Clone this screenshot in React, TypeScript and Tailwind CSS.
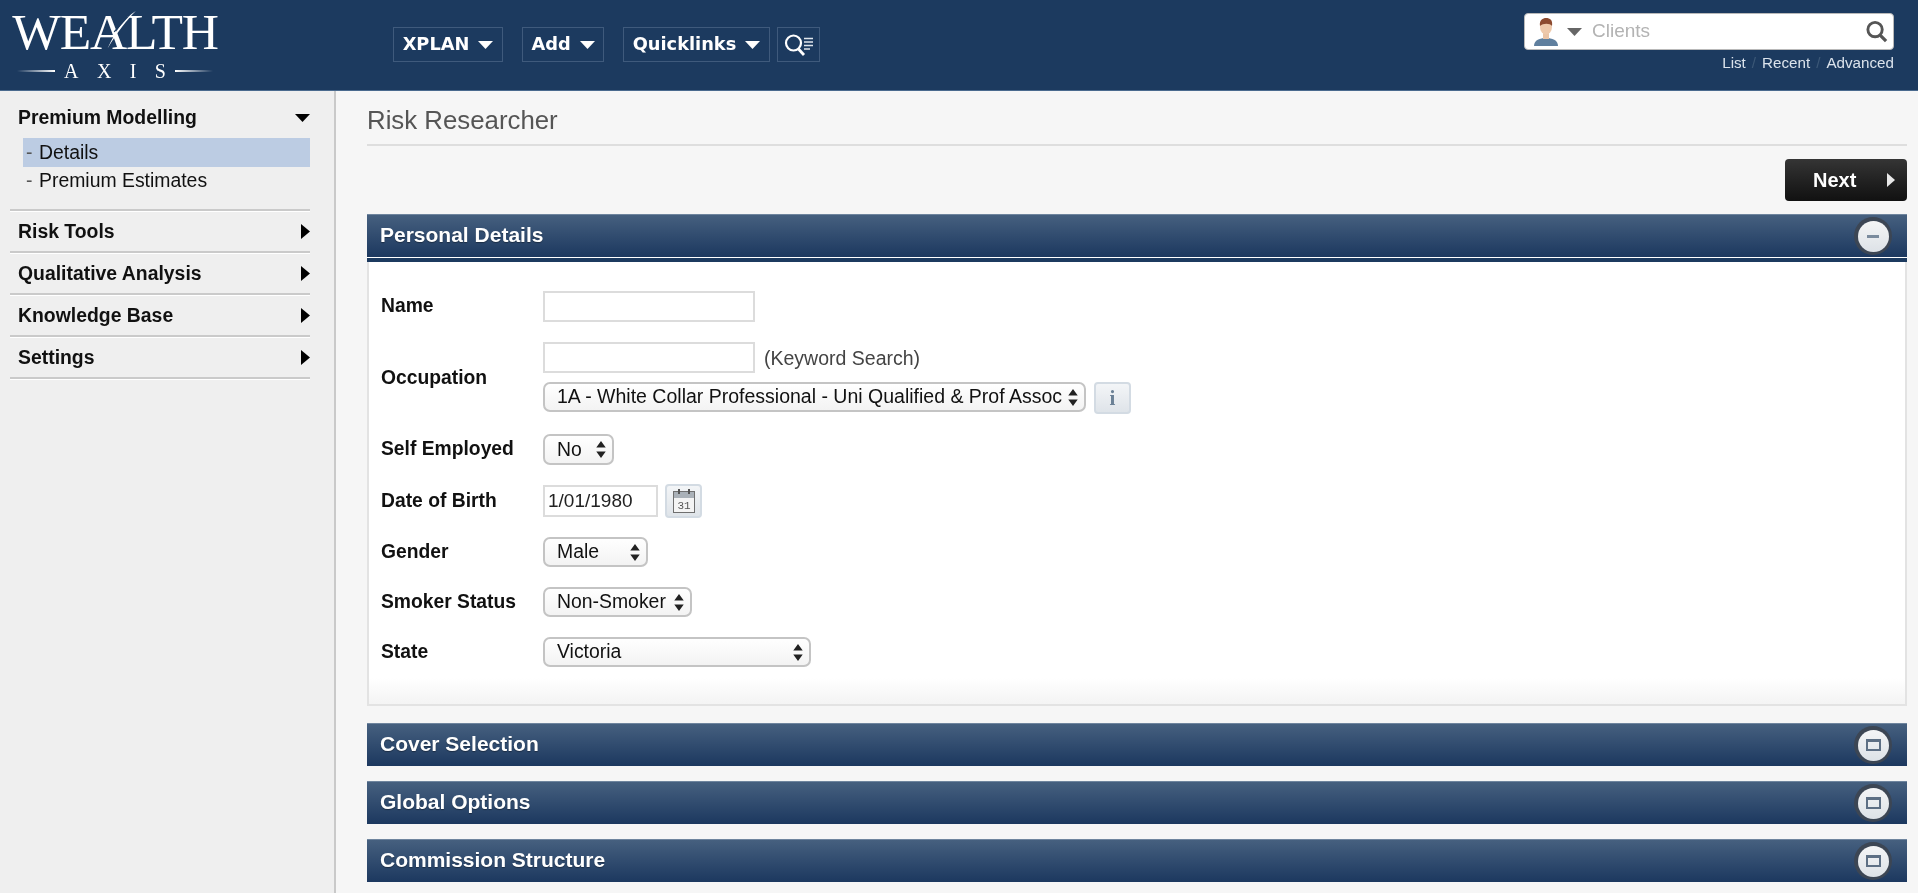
import React from "react";

const sans = "font-['Liberation_Sans',Arial,sans-serif]";

function Tri({ dir, className }: { dir: "down" | "right"; className: string }) {
  return (
    <svg viewBox="0 0 10 10" className={className} preserveAspectRatio="none" aria-hidden>
      {dir === "down" ? <path d="M0 0H10L5 10Z" fill="currentColor" /> : <path d="M0 0L10 5L0 10Z" fill="currentColor" />}
    </svg>
  );
}

function Logo() {
  return (
    <div className="w-[230px] flex flex-col items-center pt-[10px] text-white font-['Liberation_Serif',serif]">
      <div className="relative h-[44px] w-[208px] text-[51.500px] leading-[44px] tracking-[-1.200px] whitespace-nowrap text-center">
        WEALTH
        <svg viewBox="0 0 60 50" className="absolute left-[84px] top-[-3px] w-[50px] h-[48px]" aria-hidden>
          <path d="M49 1C36 9 26 22 15 46C27 26 38 12 49 1Z" fill="#fff" />
          <path d="M23 26L41 6" stroke="#1c3a5f" strokeWidth="1.600" />
        </svg>
      </div>
      <div className="flex items-center h-[24px] w-[196px] mt-[5px]">
        <span className="h-[2px] w-[38px] bg-gradient-to-r from-transparent to-white" />
        <span className="flex-1 flex justify-between px-[9px] text-[20px] leading-none">
          <span>A</span><span>X</span><span>I</span><span>S</span>
        </span>
        <span className="h-[2px] w-[38px] bg-gradient-to-l from-transparent to-white" />
      </div>
    </div>
  );
}

function NavBtn({ label, w }: { label: string; w: string }) {
  return (
    <div className={`${w} h-[35px] flex items-center justify-center gap-[9px] border border-[#3f5a7c] bg-[#1c3a5f] text-white text-[17.800px] font-bold font-['DejaVu_Sans',sans-serif]`}>
      <span className="pb-[1px]">{label}</span>
      <Tri dir="down" className="w-[15px] h-[8px] text-white" />
    </div>
  );
}

function Header() {
  return (
    <header className={`h-[91px] shrink-0 flex bg-[#1c3a5f] border-b border-[#4a6a8e] ${sans}`}>
      <div className="w-[393px] shrink-0"><Logo /></div>
      <div className="flex items-start pt-[27px]">
        <NavBtn label="XPLAN" w="w-[110px]" />
        <div className="w-[19px]" />
        <NavBtn label="Add" w="w-[82px]" />
        <div className="w-[19px]" />
        <NavBtn label="Quicklinks" w="w-[147px]" />
        <div className="w-[7px]" />
        <div className="w-[43px] h-[35px] border border-[#3f5a7c] flex items-center justify-center">
          <svg viewBox="0 0 32 24" className="w-[32px] h-[24px]" fill="none" stroke="#fff" aria-hidden>
            <circle cx="10.500" cy="10" r="7.500" strokeWidth="2.200" />
            <path d="M15.500 16L21 22" strokeWidth="2.800" />
            <path d="M21 5.500H30M21 9H30M21 12.500H30M21 16H27" strokeWidth="1.500" stroke="#dfe5ec" />
          </svg>
        </div>
      </div>
      <div className="ml-auto mr-[24px] w-[370px] flex flex-col pt-[13px]">
        <div className="h-[37px] bg-white rounded-[4px] border border-[#b9b9b9] flex items-center pl-[9px] pr-[5px]">
          <svg viewBox="0 0 24 30" className="w-[24px] h-[30px]" aria-hidden>
            <path d="M0 29C0 23 6 21 12 21C18 21 24 23 24 29Z" fill="#5f7f9e" />
            <rect x="9" y="15" width="6" height="7" fill="#eac4a6" />
            <ellipse cx="12" cy="10" rx="6" ry="7.500" fill="#eec9ab" />
            <path d="M6 9C5 3 9 1 12 1C16 1 19 3 18 9C16 6 9 6 6 9Z" fill="#8c4a2f" />
          </svg>
          <Tri dir="down" className="w-[15px] h-[8px] text-[#666] ml-[9px]" />
          <span className="ml-[10px] text-[19px] text-[#b3b3b3]">Clients</span>
          <svg viewBox="0 0 24 24" className="ml-auto w-[23px] h-[23px]" fill="none" stroke="#555" aria-hidden>
            <circle cx="10.500" cy="10" r="7.500" strokeWidth="3" />
            <path d="M16 16L22 22" strokeWidth="3.400" />
          </svg>
        </div>
        <div className="mt-[3px] flex justify-end items-center text-[15.200px] leading-[20px] text-[#dbe3ec]">
          <span>List</span>
          <span className="mx-[6px] text-[#3c5877]">/</span>
          <span>Recent</span>
          <span className="mx-[6px] text-[#3c5877]">/</span>
          <span>Advanced</span>
        </div>
      </div>
    </header>
  );
}

function SideRow({ label }: { label: string }) {
  return (
    <div className="h-[42px] flex items-center justify-between pl-[8px] border-b-2 border-[#cacaca] shadow-[0_1px_0_#fff]">
      <span className="font-bold pt-[1px]">{label}</span>
      <Tri dir="right" className="w-[9px] h-[15px] text-black" />
    </div>
  );
}

function Sidebar() {
  return (
    <aside className={`w-[336px] shrink-0 bg-[#efefef] border-r-2 border-[#c9c9c9] pl-[10px] pr-[24px] text-[19.400px] text-[#111] ${sans}`}>
      <div className="pt-[7px] pb-[14px] border-b-2 border-[#cacaca] shadow-[0_1px_0_#fff]">
        <div className="h-[40px] flex items-center justify-between pl-[8px]">
          <span className="font-bold">Premium Modelling</span>
          <Tri dir="down" className="w-[15px] h-[8px] text-black" />
        </div>
        <div className="ml-[13px] h-[29px] bg-[#bccce3] flex items-center pl-[3px]">
          <span className="w-[13px] text-[#555]">-</span>Details
        </div>
        <div className="ml-[13px] h-[28px] flex items-center pl-[3px]">
          <span className="w-[13px] text-[#555]">-</span>Premium Estimates
        </div>
      </div>
      <SideRow label="Risk Tools" />
      <SideRow label="Qualitative Analysis" />
      <SideRow label="Knowledge Base" />
      <SideRow label="Settings" />
    </aside>
  );
}

function RoundBtn({ open }: { open?: boolean }) {
  return (
    <div className="w-[38px] h-[38px] rounded-full bg-[#3c4654] flex items-center justify-center">
      <div className="w-[31px] h-[31px] rounded-full bg-gradient-to-b from-[#f4f5f6] to-[#dde2e7] flex items-center justify-center">
        {open ? (
          <div className="w-[12px] h-[3px] bg-[#7a8b9d]" />
        ) : (
          <div className="w-[15px] h-[12px] border-2 border-t-[3px] border-[#5d6f84]" />
        )}
      </div>
    </div>
  );
}

function PanelHead({ title, open }: { title: string; open?: boolean }) {
  return (
    <div className="h-[43px] flex items-center justify-between pl-[13px] pr-[15px] bg-gradient-to-b from-[#46607f] to-[#1c385f] border-t border-[#6f859e] text-white text-[21px] font-bold [text-shadow:0_1px_1px_rgba(0,0,0,0.35)]">
      <span className="pb-[2px]">{title}</span>
      <RoundBtn open={open} />
    </div>
  );
}

function Input({ w, value, h = "h-[31px]" }: { w: string; value?: string; h?: string }) {
  return (
    <input
      readOnly
      value={value ?? ""}
      className={`${w} ${h} bg-white border-2 border-[#dcdcdc] px-[3px] text-[19px] text-[#222] outline-none`}
    />
  );
}

function Select({ w, value, h = "h-[30px]", size = "text-[19.400px]" }: { w: string; value: string; h?: string; size?: string }) {
  return (
    <div className={`relative ${w} ${h}`}>
      <select
        value={value}
        onChange={() => {}}
        className={`appearance-none w-full h-full rounded-[7px] border-2 border-[#c4c4c4] bg-gradient-to-b from-white to-[#f3f3f3] pl-[12px] pr-[22px] pb-[2px] ${size} leading-[24px] text-[#111] outline-none overflow-hidden`}
      >
        <option>{value}</option>
      </select>
      <svg viewBox="0 0 10 18" className="absolute right-[8px] top-[7px] w-[10px] h-[17px] pointer-events-none" aria-hidden>
        <path d="M5 0L10 7H0ZM5 18L0 11H10Z" fill="#222" />
      </svg>
    </div>
  );
}

function Row({ label, mt, children }: { label: string; mt: string; children: React.ReactNode }) {
  return (
    <div className={`flex items-center ${mt}`}>
      <div className="w-[162px] shrink-0 font-bold text-[19.300px] text-[#111]">{label}</div>
      {children}
    </div>
  );
}

function SquareBtn({ h, children }: { h: string; children: React.ReactNode }) {
  return (
    <div className={`${h} w-[37px] rounded-[4px] border-2 border-[#d3dbe3] bg-gradient-to-b from-[#f3f5f7] to-[#dfe4e9] flex items-center justify-center`}>
      {children}
    </div>
  );
}

function Main() {
  return (
    <main className={`flex-1 min-w-0 bg-[#f6f6f6] pl-[31px] pr-[11px] ${sans}`}>
      <div className="h-[55px] flex items-center border-b-2 border-[#dedede] text-[25.800px] text-[#555] pt-[5px]">Risk Researcher</div>
      <div className="mt-[13px] flex justify-end">
        <div className="w-[122px] h-[42px] rounded-[4px] bg-gradient-to-b from-[#353535] to-[#111] flex items-center justify-between pl-[28px] pr-[12px] text-white text-[20px] font-bold">
          <span>Next</span>
          <Tri dir="right" className="w-[8px] h-[14px] text-[#e8e8e8]" />
        </div>
      </div>
      <div className="mt-[13px]">
        <PanelHead title="Personal Details" open />
        <div className="h-px bg-white" />
        <div className="h-[4px] bg-[#1c3a5f]" />
        <div className="h-[444px] border-2 border-t-0 border-[#e3e3e3] bg-gradient-to-b from-white from-[94%] to-[#f4f4f4] pl-[12px] pt-[29px]">
          <Row label="Name" mt="">
            <Input w="w-[212px]" />
          </Row>
          <Row label="Occupation" mt="mt-[20px]">
            <div className="flex flex-col h-[72px]">
              <div className="flex items-center">
                <Input w="w-[212px]" />
                <span className="ml-[9px] text-[19.500px] text-[#444] relative top-[1px]">(Keyword Search)</span>
              </div>
              <div className="mt-[9px] flex items-start gap-[8px]">
                <Select w="w-[543px]" size="text-[19.500px]" value="1A - White Collar Professional - Uni Qualified & Prof Assoc" />
                <SquareBtn h="h-[32px]">
                  <span className="font-['Liberation_Serif',serif] font-bold text-[21px] text-[#6b8196] leading-none">i</span>
                </SquareBtn>
              </div>
            </div>
          </Row>
          <Row label="Self Employed" mt="mt-[20px]">
            <Select w="w-[71px]" value="No" h="h-[31px]" />
          </Row>
          <Row label="Date of Birth" mt="mt-[19px]">
            <div className="flex items-center gap-[7px]">
              <Input w="w-[115px]" value="1/01/1980" h="h-[32px]" />
              <SquareBtn h="h-[34px]">
                <svg viewBox="0 0 24 26" className="w-[24px] h-[26px]" aria-hidden>
                  <rect x="1.500" y="3.500" width="21" height="21" fill="#f4f4f4" stroke="#6f6f6f" />
                  <rect x="2" y="4" width="20" height="6" fill="#aab1b8" />
                  <path d="M7 1V6M17 1V6" stroke="#555" strokeWidth="2" />
                  <text x="12" y="21" textAnchor="middle" fontSize="11" fontFamily="Liberation Mono, monospace" fill="#555">31</text>
                </svg>
              </SquareBtn>
            </div>
          </Row>
          <Row label="Gender" mt="mt-[19px]">
            <Select w="w-[105px]" value="Male" />
          </Row>
          <Row label="Smoker Status" mt="mt-[20px]">
            <Select w="w-[149px]" value="Non-Smoker" />
          </Row>
          <Row label="State" mt="mt-[20px]">
            <Select w="w-[268px]" value="Victoria" />
          </Row>
        </div>
      </div>
      <div className="mt-[17px]"><PanelHead title="Cover Selection" /></div>
      <div className="mt-[15px]"><PanelHead title="Global Options" /></div>
      <div className="mt-[15px]"><PanelHead title="Commission Structure" /></div>
    </main>
  );
}

export default function App() {
  return (
    <div className="h-screen overflow-hidden flex flex-col bg-[#f6f6f6] blur-[0.4px]">
      <Header />
      <div className="flex-1 flex min-h-0">
        <Sidebar />
        <Main />
      </div>
    </div>
  );
}
